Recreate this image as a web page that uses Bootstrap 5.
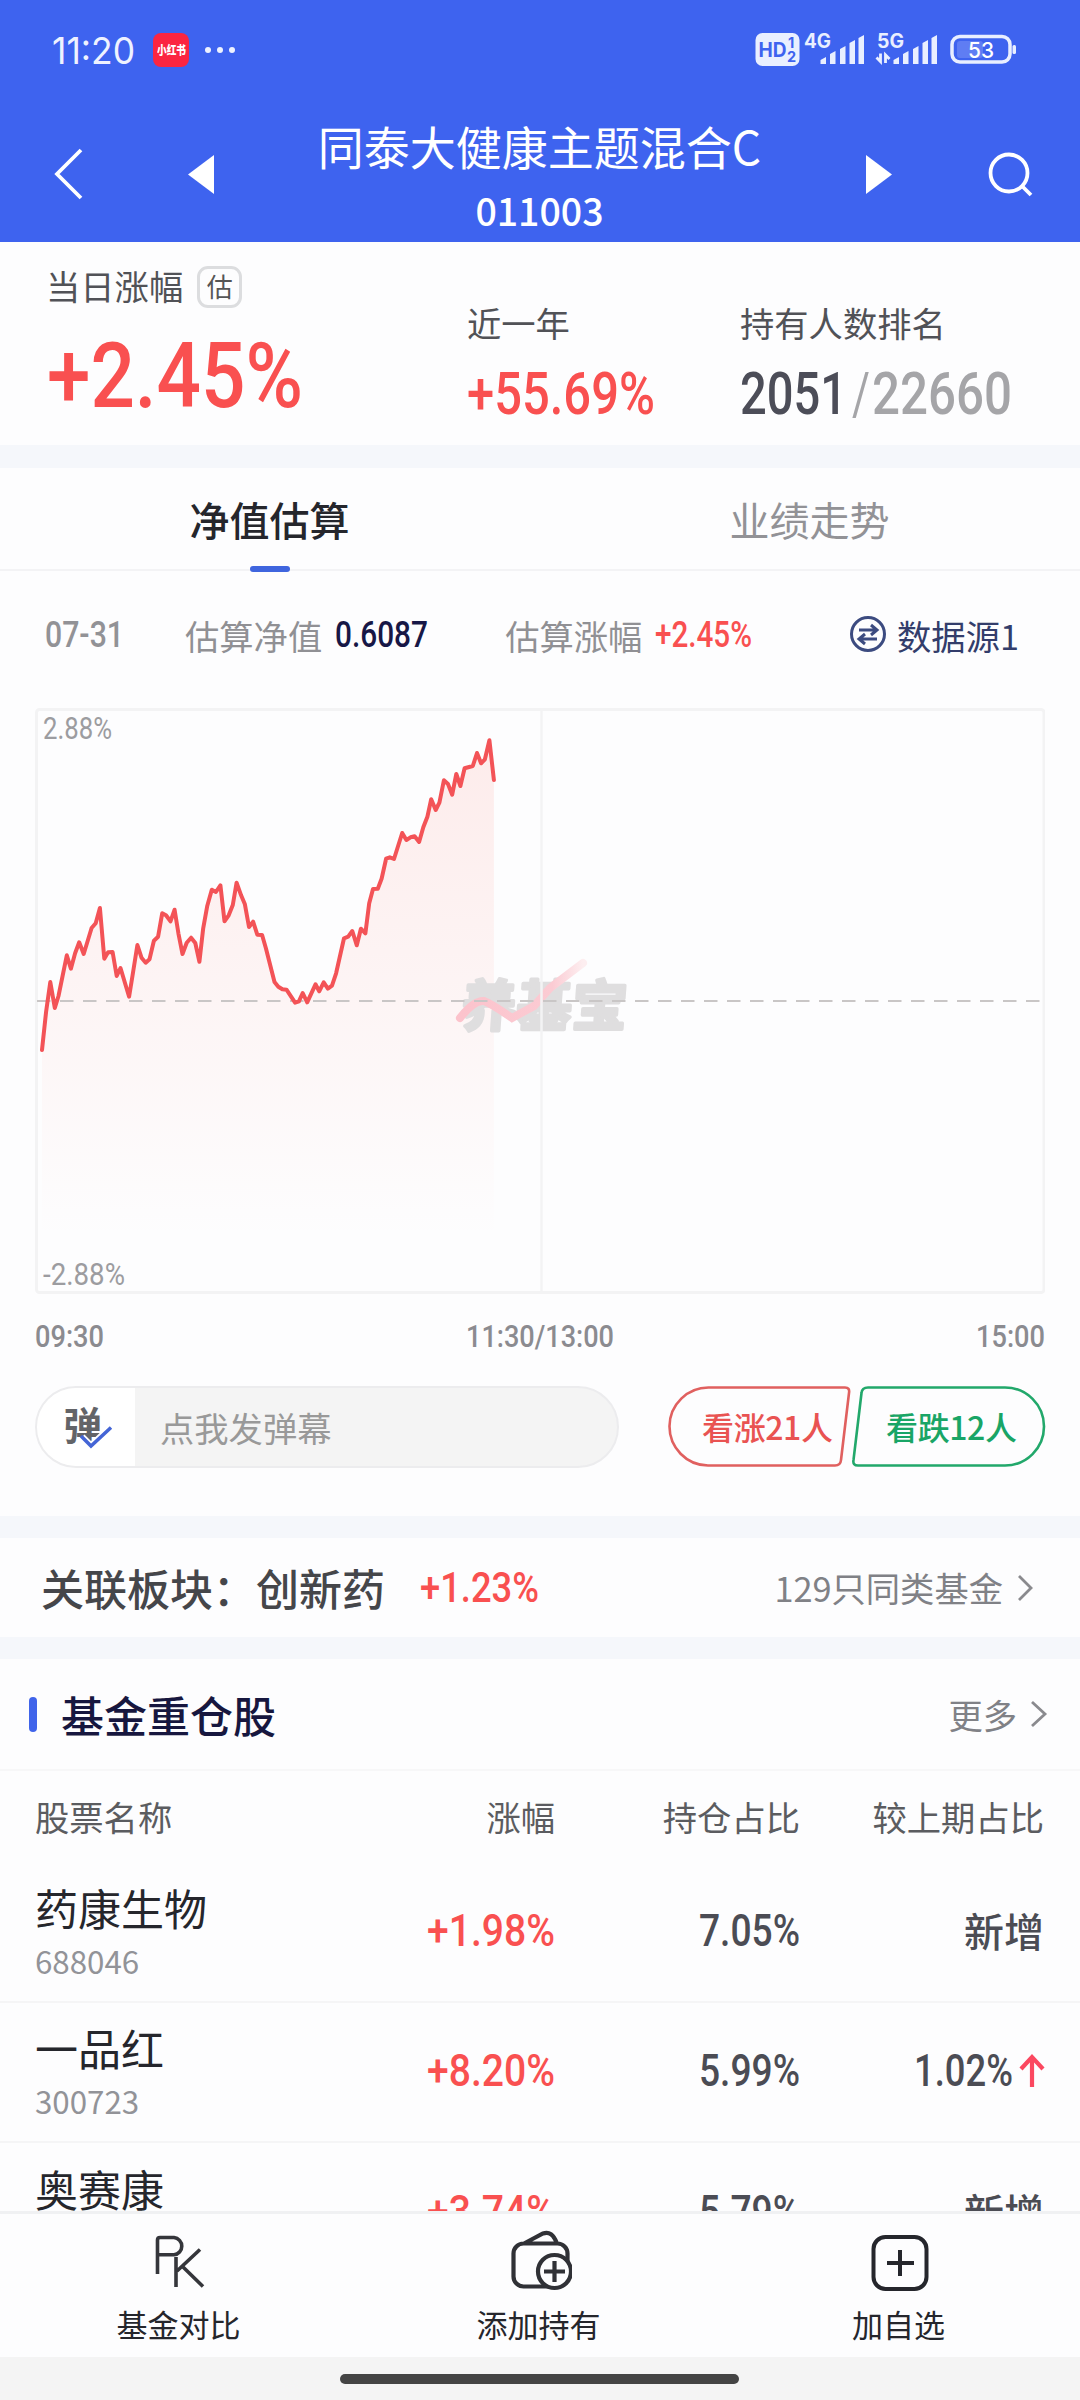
<!DOCTYPE html>
<html lang="zh-CN">
<head>
<meta charset="utf-8">
<meta name="viewport" content="width=device-width, initial-scale=1">
<title>同泰大健康主题混合C</title>
<link href="https://cdn.jsdelivr.net/npm/bootstrap@5.3.0/dist/css/bootstrap.min.css" rel="stylesheet">
<style>
body{font-family:"Noto Sans CJK SC",sans-serif;width:1080px;height:2400px;overflow:hidden;background:#fdfdfe;color:#25262c;line-height:1}
svg{display:block;flex:none}
.num{font-family:Roboto,sans-serif;font-weight:500;white-space:nowrap;display:inline-block;transform-origin:0 50%;line-height:1}
.up{color:#f95050}
.top-blue{background:#3e63ef;height:242px}
.status{height:100px;padding:0 64px 0 52px;color:#eef2ff}
.clock{font-size:37px;font-family:Inter,sans-serif;font-weight:400}
.redapp{width:36px;height:34px;border-radius:8px;background:#fb2541;font-size:12px;color:#fff;margin-left:18px}
.redapp .num{font-family:"Noto Sans CJK SC",sans-serif;font-weight:900}
.titlebar{height:142px;padding:0 46px 0 52px}
.fund-name{font-size:46px;line-height:50px;white-space:nowrap}
.fund-code{font-size:37.5px;line-height:40px;margin-top:20px;font-weight:500}
.stats{height:203px}
.lbl{font-size:34.3px;line-height:40px;color:#515257;white-space:nowrap}
.est{width:45px;height:42px;border:3px solid #dcdddf;border-radius:11px;font-size:26px;line-height:33px;color:#555;margin-left:14px}
.band{background:#f5f7fb}
.tabrow{height:103px;border-bottom:2px solid #f3f3f5;font-size:40px}
.tab-item{height:106px;padding-top:29px;line-height:44px;padding-right:1px}
.tab-item i{width:40px;height:6px;border-radius:3px;background:#3f65de;margin-top:25px}
.info{height:137px;padding:0 61px 10px 45px}
.chartbox{margin:0 35px}
.times{padding:27px 35px 0 35px;height:92px;color:#8b8b90;font-size:31px}
.danmu{width:584px;height:82px;border:2px solid #ececee;border-radius:41px;background:#f4f4f4;overflow:hidden}
.danmu-l{width:98px;background:#fff}
.danmu-t{font-size:34.300px;color:#999;padding-left:25px}
.hot{font-size:43px;color:#45464a;font-weight:500;white-space:nowrap}
.sub{font-size:34.3px;color:#808186}
.accent{width:8px;height:35px;border-radius:4px;background:#4064ea;margin-right:24px}
.hold{padding:0 36px 0 35px;color:#4b4c54}
.hold>div{flex:none}
.heads{height:91px;font-size:34.3px;color:#5b5c60}
.c1{width:336px}.c2{width:184px}.c3{width:245px}.c4{width:244px}
.stock{height:140.5px;border-bottom:2px solid #f5f5f6;padding-bottom:2px}
.sname{font-size:43px;line-height:48px;color:#25262c}
.scode{font-size:31.3px;line-height:36px;color:#929398;margin-top:12px;margin-bottom:-1px}
.pct{font-size:45px}
.isnew{font-size:40px;font-weight:500}
.fixedbar{top:2211px;left:0;width:1080px;height:146px;background:#fdfdfe;border-top:3px solid #f0f1f3}
.fixedbar div{width:360px;font-size:31px}
.fixedbar svg{margin-top:15px}
.fixedbar span{margin:15px 3px 0 0}
.home{top:2357px;left:0;width:1080px;height:43px;background:#f4f4f4;padding:17px 1px 0 0}
.home i{width:399px;height:10px;border-radius:5px;background:#444}
</style>
<script src="https://cdn.jsdelivr.net/npm/bootstrap@5.3.0/dist/js/bootstrap.bundle.min.js"></script>
</head>
<body class="position-relative">
<header class="top-blue text-white">
  <div class="status d-flex align-items-center">
    <span class="clock num" data-w="83">11:20</span>
    <span class="redapp d-flex align-items-center justify-content-center text-nowrap"><span class="num" data-w="29">小红书</span></span>
    <svg style="margin-left:15px" width="34" height="34"><g fill="#eef2ff"><circle cx="4" cy="17" r="3"/><circle cx="16" cy="17" r="3"/><circle cx="28" cy="17" r="3"/></g></svg>
    <svg class="ms-auto" width="262" height="40" viewBox="754 30 262 40" font-family="Inter,sans-serif" font-weight="700">
      <rect x="755.500" y="33" width="44" height="33" rx="7" fill="#e9efff"/>
      <text x="758.500" y="56.500" font-size="20" textLength="28" lengthAdjust="spacingAndGlyphs" fill="#3e63ef">HD</text>
      <text x="788" y="48" font-size="14.500" fill="#3e63ef">1</text><text x="787" y="61.500" font-size="14.500" fill="#3e63ef">2</text>
      <g fill="#e9efff" font-size="19.500"><text x="804" y="48" textLength="27" lengthAdjust="spacingAndGlyphs">4G</text><text x="877" y="48" textLength="27" lengthAdjust="spacingAndGlyphs">5G</text></g>
      <path d="M820.500 64v-4l5.500-3v7zM830 64V54l5.500-3v13zM840 64V49l5.500-3v18zM849.500 64V43l5.500-3v24zM858.500 64V38l5.500-3v29zM893.500 64v-4l5.500-3v7zM903 64V54l5.500-3v13zM913 64V49l5.500-3v18zM922.500 64V43l5.500-3v24zM931.500 64V38l5.500-3v29z" fill="#e9efff"/>
      <path d="M880.500 53.500v8l-4-4M885.500 63v-8l4 4" stroke="#e9efff" stroke-width="2.800" fill="none"/>
      <rect x="952" y="36.500" width="58" height="25.500" rx="8" fill="none" stroke="#e9efff" stroke-width="3.500"/>
      <rect x="957" y="41" width="26" height="17" rx="3" fill="#5f7df3"/><rect x="1012.500" y="45" width="3.500" height="9" rx="1.500" fill="#e9efff"/>
      <text x="968" y="57.500" font-size="22" font-weight="500" textLength="26" lengthAdjust="spacingAndGlyphs" fill="#fff">53</text>
    </svg>
  </div>
  <div class="titlebar d-flex align-items-start">
    <svg style="margin-top:46px" width="34" height="56"><path d="M29 4L5 28l24 24" fill="none" stroke="#fff" stroke-width="3.800"/></svg>
    <svg style="margin:55px 0 0 101px" width="28" height="40"><path d="M27 0v39L1 19.500z" fill="#fff"/></svg>
    <div class="flex-fill text-center" style="padding:20px 1px 0 0"><div class="fund-name">同泰大健康主题混合C</div><div class="fund-code">011003</div></div>
    <svg style="margin:55px 95px 0 0" width="28" height="40"><path d="M1 0v39l26-19.500z" fill="#fff"/></svg>
    <svg style="margin-top:51px" width="46" height="48"><g fill="none" stroke="#fff" stroke-width="3.800"><circle cx="21" cy="22" r="18.500"/><path d="M34 35l9 9"/></g></svg>
  </div>
</header>
<section class="stats d-flex">
  <div style="width:418px;padding:24px 0 0 46px"><div class="d-flex align-items-center"><span class="lbl" style="margin-top:-4px">当日涨幅</span><span class="est text-center">估</span></div>
    <span class="num up" style="font-size:91px;margin:23px 0 0 1px" data-w="256">+2.45%</span></div>
  <div style="width:274px;padding:60px 0 0 49px"><div class="lbl">近一年</div><span class="num up" style="font-size:59px;margin-top:22px" data-w="188">+55.69%</span></div>
  <div style="padding:60px 0 0 48px"><div class="lbl">持有人数排名</div><div class="d-flex" style="font-size:59px;margin-top:22px"><span class="num" style="color:#4c4d58" data-w="107">2051</span><span class="num" style="color:#a5a5a8;font-weight:400;margin-left:5px" data-w="18">/</span><span class="num" style="color:#a5a5a8;margin-left:2px" data-w="140">22660</span></div></div>
</section>
<div class="band" style="height:23px"></div>
<nav class="tabrow d-flex">
  <div class="tab-item w-50 d-flex flex-column align-items-center" style="font-weight:500">净值估算<i></i></div>
  <div class="tab-item w-50 text-center" style="color:#929296">业绩走势</div>
</nav>
<div class="info d-flex align-items-center">
  <span class="num" style="font-size:36px;color:#929296" data-w="79">07-31</span>
  <span class="lbl" style="margin-left:61px;color:#909094">估算净值</span><span class="num" style="font-size:36px;color:#171746;margin-left:13px" data-w="93">0.6087</span>
  <span class="lbl" style="margin-left:77px;color:#909094">估算涨幅</span><span class="num up" style="font-size:36px;margin-left:13px" data-w="97">+2.45%</span>
  <svg class="ms-auto" style="margin-right:10px" width="38" height="38"><g fill="none" stroke="#3c4b80" stroke-width="3"><circle cx="19" cy="18" r="16.500"/><path d="M10 14h17M22 9l6 5-6 5M28 23H11M16 18l-6 5 6 5"/></g></svg>
  <span class="lbl" style="color:#333d6b">数据源1</span>
</div>
<svg class="chartbox" width="1010" height="586" viewBox="35 708 1010 586">
  <defs><linearGradient id="fade" x1="0" y1="740" x2="0" y2="1240" gradientUnits="userSpaceOnUse"><stop offset="0" stop-color="#ff5040" stop-opacity=".1"/><stop offset="1" stop-color="#ff5040" stop-opacity="0"/></linearGradient>
  <linearGradient id="ribbon" x1="0" y1="0" x2="1" y2="0"><stop offset="0" stop-color="#fcc3cc"/><stop offset=".75" stop-color="#fbcbd3"/><stop offset="1" stop-color="#fdeef0"/></linearGradient></defs>
  <rect x="36.500" y="709.500" width="1007.500" height="583" rx="3" fill="none" stroke="#f3f3f4" stroke-width="3"/>
  <path id="area" fill="url(#fade)"/>
  <g fill="#dfdedf" stroke="#dfdedf" stroke-width="3.500" stroke-linejoin="round" font-size="55" font-weight="700" transform="translate(460 1026) skewX(-4)"><text x="0" y="0" textLength="166">养基宝</text></g>
  <path d="M460 1018Q474 1000 484 1001Q492 1004 512 1018L534 1006L550 988L583 963" fill="none" stroke="url(#ribbon)" stroke-width="8" stroke-linecap="round"/>
  <path d="M541.500 710V1291" stroke="#f3f3f4" stroke-width="2.500"/>
  <path d="M37 1001H1043" stroke="#c9c6c6" stroke-width="2" stroke-dasharray="13.500 9.500"/>
  <path id="line" fill="none" stroke="#f35357" stroke-width="4" stroke-linejoin="round" stroke-linecap="round"/>
  <g font-family="Roboto" font-size="31" fill="#9c9ca0"><text x="43" y="739" textLength="69" lengthAdjust="spacingAndGlyphs">2.88%</text><text x="43" y="1285" textLength="82" lengthAdjust="spacingAndGlyphs">-2.88%</text></g>
</svg>
<div class="times d-flex justify-content-between"><span class="num" data-w="69">09:30</span><span class="num" data-w="148">11:30/13:00</span><span class="num" data-w="69">15:00</span></div>
<div class="d-flex" style="padding:0 34px 0 35px;height:130px">
  <div class="danmu d-flex align-items-center">
    <div class="danmu-l h-100 d-flex align-items-center"><svg width="98" height="78" viewBox="37 1388 98 78"><text x="63.500" y="1440" font-size="38.500" font-weight="700" fill="#636468">弹</text><path d="M82 1437l9 9 19-18" fill="none" stroke="#fff" stroke-width="7"/><path d="M81 1436l10 10 20-18.500" fill="none" stroke="#4465d6" stroke-width="3.500"/></svg></div>
    <div class="danmu-t">点我发弹幕</div>
  </div>
  <svg class="ms-auto" width="379" height="82" viewBox="667 1386 379 82" font-size="32" font-weight="500">
    <path d="M709 1387.500H845Q850 1387.500 849 1393L841 1460Q840.500 1465.500 835 1465.500H708A39 39 0 0 1 709 1387.500Z" fill="none" stroke="#e0605f" stroke-width="2.600"/>
    <path d="M868 1387.500H1005A39 39 0 0 1 1005 1465.500H858Q852.500 1465.500 853.500 1460L861.500 1393Q862 1387.500 868 1387.500Z" fill="none" stroke="#22a86b" stroke-width="2.600"/>
    <text x="702" y="1440" fill="#e95352" textLength="131">看涨21人</text><text x="886" y="1440" fill="#19a566" textLength="131">看跌12人</text>
  </svg>
</div>
<div class="band" style="height:22px"></div>
<div class="d-flex align-items-center" style="height:99px;padding:0 46px 0 41px">
  <span class="hot">关联板块：创新药</span><span class="num up" style="font-size:42px;margin-left:35px" data-w="119">+1.23%</span>
  <span class="sub ms-auto">129只同类基金</span><svg style="margin-left:14px" width="17" height="30"><path d="M2 3l12 12L2 27" fill="none" stroke="#8a8a8e" stroke-width="2.800"/></svg>
</div>
<div class="band" style="height:22px"></div>
<div class="d-flex align-items-center" style="height:112px;padding:0 32px 0 29px;border-bottom:2px solid #f7f7f8">
  <span class="accent"></span><span class="hot" style="color:#17173f">基金重仓股</span>
  <span class="sub ms-auto">更多</span><svg style="margin-left:13px" width="18" height="30"><path d="M2 3l13 12L2 27" fill="none" stroke="#8a8a8e" stroke-width="2.800"/></svg>
</div>
<div class="hold heads d-flex align-items-center"><div class="c1">股票名称</div><div class="c2 text-end">涨幅</div><div class="c3 text-end">持仓占比</div><div class="c4 text-end">较上期占比</div></div>
<div class="hold stock d-flex align-items-center"><div class="c1"><div class="sname">药康生物</div><div class="scode">688046</div></div><div class="c2 text-end"><span class="num up pct" data-w="128">+1.98%</span></div><div class="c3 text-end"><span class="num pct" data-w="101">7.05%</span></div><div class="c4 text-end isnew">新增</div></div>
<div class="hold stock d-flex align-items-center"><div class="c1"><div class="sname">一品红</div><div class="scode">300723</div></div><div class="c2 text-end"><span class="num up pct" data-w="128">+8.20%</span></div><div class="c3 text-end"><span class="num pct" data-w="101">5.99%</span></div><div class="c4 d-flex justify-content-end align-items-center"><span class="num pct" data-w="99">1.02%</span><svg style="margin:0 -1px 0 6px" width="26" height="36"><path d="M13 34V4M2 16L13 4l11 12" fill="none" stroke="#fb4860" stroke-width="4.200"/></svg></div></div>
<div class="hold stock d-flex align-items-center"><div class="c1"><div class="sname">奥赛康</div><div class="scode">002755</div></div><div class="c2 text-end"><span class="num up pct" data-w="128">+3.74%</span></div><div class="c3 text-end"><span class="num pct" data-w="101">5.79%</span></div><div class="c4 text-end isnew">新增</div></div>
<footer class="fixedbar position-absolute d-flex">
  <div class="d-flex flex-column align-items-center"><svg width="62" height="64" viewBox="149 2229 62 64"><path d="M157.500 2274V2240q0-2.500 2.500-2.500H174a8.700 8.700 0 0 1 0 17.300H157.500M176 2287V2257M200 2249.500L177 2271M182 2266L203 2286.500" fill="none" stroke="#35363b" stroke-width="3.600"/></svg><span>基金对比</span></div>
  <div class="d-flex flex-column align-items-center"><svg width="64" height="64" viewBox="508 2229 64 64"><g fill="none" stroke="#303136" stroke-width="4.200"><path d="M554 2286.500H523.500a10 10 0 0 1-10-10V2253.500a10 10 0 0 1 10-10H557.500a10 10 0 0 1 10 10V2262M524 2243.500L543 2233.500Q552 2230 557 2243.500"/><circle cx="554.500" cy="2271.500" r="16.500" fill="#fdfdfe"/><path d="M554.500 2261v21M544 2271.500h21"/></g></svg><span>添加持有</span></div>
  <div class="d-flex flex-column align-items-center"><svg width="64" height="64" viewBox="868 2229 64 64"><g fill="none" stroke="#25262c" stroke-width="4"><rect x="873.500" y="2237" width="53" height="52" rx="12"/><path d="M900 2250v26M887 2263h27"/></g></svg><span>加自选</span></div>
</footer>
<div class="home position-absolute d-flex justify-content-center"><i></i></div>
<script>
document.querySelectorAll('[data-w]').forEach(e=>{
  const w=+e.dataset.w,n=e.getBoundingClientRect().width;
  e.style.width=w+'px';e.style.textAlign='left';e.style.transform='scaleX('+w/n+')';
});
// Minute points of the estimate: horizontal step and level, in sampled units
const pts=[[122,1080],[134,965],[146,876],[159,954],[170,918],[194,796],[206,836],[218,790],[230,757],[243,792],[266,714],[278,700],[290,654],[303,806],[314,787],[327,786],[339,858],[350,834],[375,920],[386,850],[399,765],[411,803],[423,818],[434,808],[447,752],[459,740],[471,670],[482,676],[495,694],[507,659],[518,730],[530,792],[542,758],[555,743],[567,759],[579,815],[590,715],[602,647],[615,599],[627,606],[640,586],[652,694],[664,676],[676,645],[687,578],[700,616],[711,643],[723,711],[735,695],[747,734],[761,735],[772,775],[797,876],[808,890],[820,898],[832,899],[857,938],[868,934],[879,909],[892,937],[916,883],[927,904],[940,877],[952,896],[964,887],[976,850],[999,745],[1011,740],[1023,723],[1036,766],[1048,716],[1061,730],[1072,640],[1083,597],[1097,596],[1108,566],[1121,506],[1132,502],[1144,507],[1168,429],[1180,450],[1192,442],[1204,439],[1217,456],[1229,412],[1241,380],[1252,328],[1265,360],[1276,338],[1289,271],[1301,282],[1313,314],[1325,252],[1337,288],[1349,235],[1373,228],[1385,189],[1397,220],[1408,208],[1421,151],[1434,270]]
 .map(p=>[(p[0]/2.9037).toFixed(1),(690+p[1]/3).toFixed(1)]);
const d='M'+pts.map(p=>p.join(' ')).join('L');
document.getElementById('line').setAttribute('d',d);
document.getElementById('area').setAttribute('d',d+'V1240H'+pts[0][0]+'Z');
</script>
</body>
</html>
